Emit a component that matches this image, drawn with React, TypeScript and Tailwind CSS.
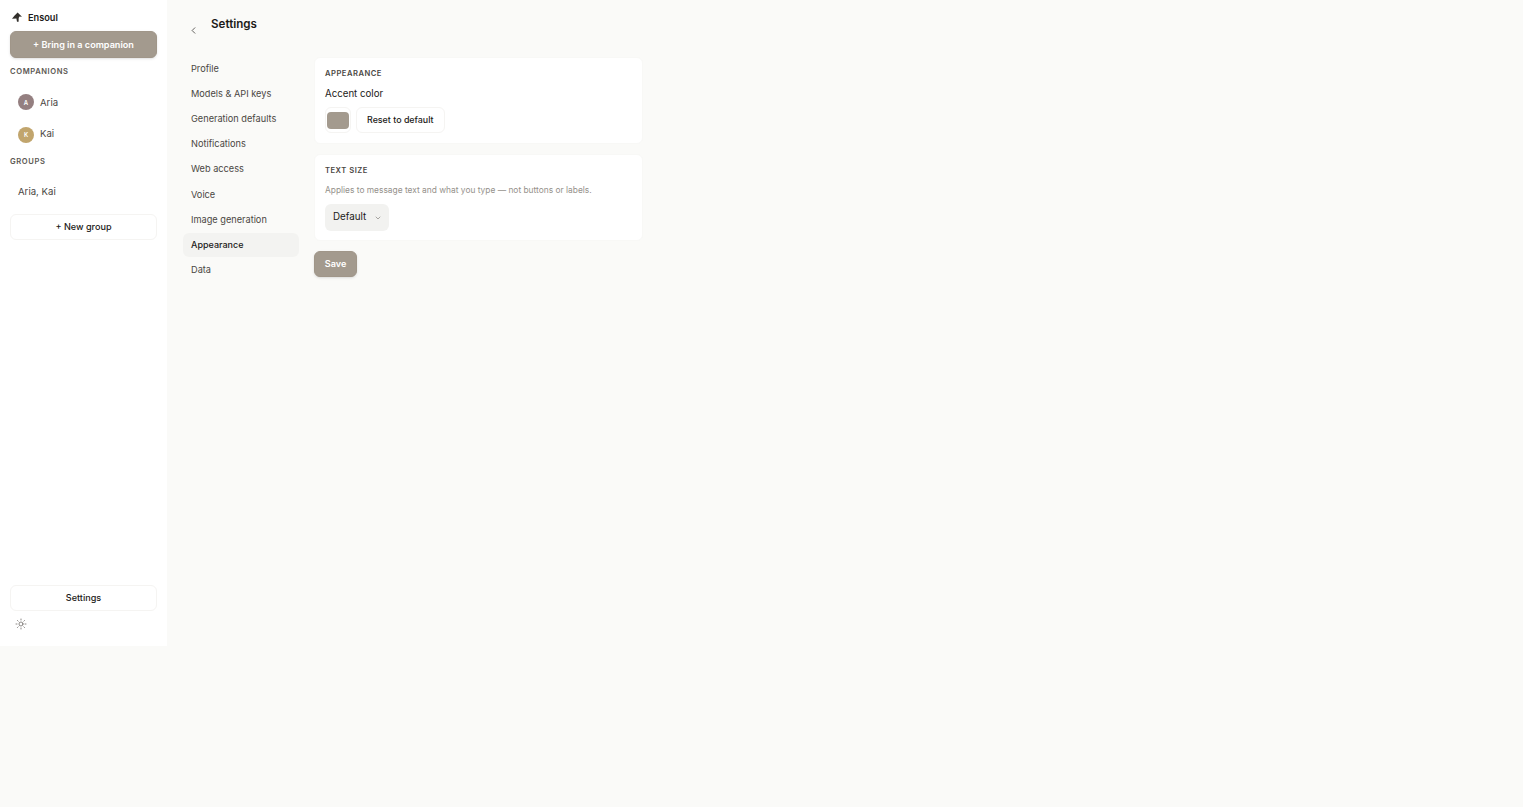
import { ChevronDown, ChevronLeft, Sun } from "lucide-react";

const navItems = [
  "Profile",
  "Models & API keys",
  "Generation defaults",
  "Notifications",
  "Web access",
  "Voice",
  "Image generation",
  "Appearance",
  "Data",
];

function Logo() {
  return (
    <svg width="12" height="12" viewBox="0 0 12 12" fill="#33302c">
      <path d="M6.6 0.6 11 4.8 8.5 4.6 7.7 6 7.6 9.8 6 9.8 5.4 6.6 1 6.8 3.6 3.6Z" />
    </svg>
  );
}

function Sidebar() {
  return (
    <aside className="flex h-[646px] w-[167px] shrink-0 flex-col bg-white px-[10px] pt-[11px] pb-[16px]">
      <div className="flex h-[13px] items-center gap-[5px] pl-[1px] text-[9.2px] font-semibold text-[#1c1a18]">
        <Logo />
        <span>Ensoul</span>
      </div>
      <button className="mt-[7px] h-[26.5px] w-full rounded-[6px] border border-[#a09689] bg-[#a39a8e] pt-[1px] text-[9.1px] font-semibold text-white shadow-sm">
        + Bring in a companion
      </button>
      <div className="mt-[9.5px] text-[7.6px] leading-[10px] font-semibold tracking-[0.6px] text-[#5c5853]">COMPANIONS</div>
      <div className="mt-[10px] flex h-[32px] items-center gap-[6px] pl-[8px] text-[9.6px] text-[#4a4743]">
        <span className="-mt-[2px] flex h-[16px] w-[16px] items-center justify-center rounded-full bg-[#947f80] text-[6px] font-semibold text-white">A</span>
        Aria
      </div>
      <div className="flex h-[31px] items-center gap-[6px] pl-[8px] text-[9.6px] text-[#4a4743]">
        <span className="flex h-[16px] w-[16px] items-center justify-center rounded-full bg-[#c1a56d] text-[6px] font-semibold text-white">K</span>
        Kai
      </div>
      <div className="mt-[7px] text-[7.6px] leading-[10px] font-semibold tracking-[0.6px] text-[#5c5853]">GROUPS</div>
      <div className="mt-[9px] flex h-[32px] items-center pl-[8px] text-[9.6px] text-[#4a4743]">Aria, Kai</div>
      <button className="mt-[6px] h-[26px] w-full rounded-[6px] border border-[#f5f4f2] bg-white text-[9.1px] font-medium text-[#1c1a18]">
        + New group
      </button>
      <button className="mt-auto h-[26px] w-full rounded-[6px] border border-[#f5f4f2] bg-white text-[9.1px] font-medium text-[#1c1a18]">
        Settings
      </button>
      <div className="mt-[7px] flex h-[12px] items-center pl-[5px] text-[#5c5853]">
        <Sun size={12} strokeWidth={1.4} />
      </div>
    </aside>
  );
}

function SettingsNav() {
  return (
    <nav className="flex w-[116px] shrink-0 flex-col">
      {navItems.map((item) => (
        <div
          key={item}
          className={
            item === "Appearance"
              ? "mb-[1.1px] flex h-[24px] items-center rounded-[6px] bg-[#f3f3f1] px-[8px] text-[9px] font-medium text-[#1c1a18]"
              : "mb-[1.1px] flex h-[24px] items-center rounded-[6px] px-[8px] text-[9.2px] text-[#4a4743]"
          }
        >
          {item}
        </div>
      ))}
    </nav>
  );
}

function AppearancePanel() {
  return (
    <div className="flex w-[329px] flex-col">
      <section className="h-[87px] rounded-[6px] border border-[#f8f8f6] bg-white px-[10px] pt-[11px]">
        <div className="text-[7.6px] leading-[10px] font-semibold tracking-[0.5px] text-[#4a4743]">APPEARANCE</div>
        <div className="mt-[8px] text-[9.7px] leading-[13px] text-[#1c1a18]">Accent color</div>
        <div className="mt-[7px] flex items-center gap-[5px]">
          <div className="flex h-[26px] w-[26px] items-center justify-center rounded-[6px] border border-[#f5f4f2]">
            <div className="h-[17px] w-[22px] rounded-[4px] bg-[#a39a8e]" />
          </div>
          <button className="h-[26px] rounded-[6px] border border-[#f5f4f2] bg-white px-[10px] text-[8.9px] font-medium text-[#1c1a18]">
            Reset to default
          </button>
        </div>
      </section>
      <section className="mt-[10px] h-[87px] rounded-[6px] border border-[#f8f8f6] bg-white px-[10px] pt-[11px]">
        <div className="text-[7.6px] leading-[10px] font-semibold tracking-[0.5px] text-[#4a4743]">TEXT SIZE</div>
        <div className="mt-[9px] text-[8.4px] leading-[11px] text-[#95918b]">
          Applies to message text and what you type — not buttons or labels.
        </div>
        <div className="mt-[8px] flex h-[27px] w-[64px] items-center justify-between rounded-[6px] bg-[#f2f2f0] pr-[7px] pl-[8px] text-[9.8px] text-[#1c1a18]">
          Default
          <ChevronDown size={8} strokeWidth={1.5} className="text-[#5c5853]" />
        </div>
      </section>
      <button className="mt-[10px] h-[26px] w-[43px] rounded-[6px] border border-[#a09689] bg-[#a39a8e] text-[9.1px] font-semibold text-white shadow-sm">
        Save
      </button>
    </div>
  );
}

export default function App() {
  return (
    <div className="flex min-h-[807px] items-start bg-[#fafaf8] font-['Inter',sans-serif]">
      <Sidebar />
      <main className="flex-1 pt-[16px] pl-[16px]">
        <div className="flex items-start">
          <ChevronLeft size={11} strokeWidth={1.6} className="mt-[9px] ml-[5px] text-[#2d2b28]" />
          <h1 className="ml-[12px] text-[11.6px] leading-[16px] font-semibold text-[#1c1a18]">Settings</h1>
        </div>
        <div className="mt-[21px] flex gap-[15px]">
          <SettingsNav />
          <AppearancePanel />
        </div>
      </main>
    </div>
  );
}
